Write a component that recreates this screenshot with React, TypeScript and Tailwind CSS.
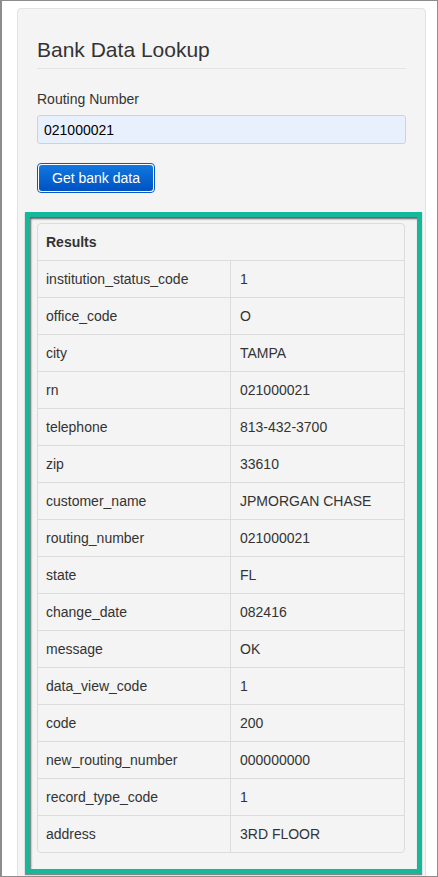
import React from 'react';

const ROWS: [string, string][] = [
  ['institution_status_code', '1'],
  ['office_code', 'O'],
  ['city', 'TAMPA'],
  ['rn', '021000021'],
  ['telephone', '813-432-3700'],
  ['zip', '33610'],
  ['customer_name', 'JPMORGAN CHASE'],
  ['routing_number', '021000021'],
  ['state', 'FL'],
  ['change_date', '082416'],
  ['message', 'OK'],
  ['data_view_code', '1'],
  ['code', '200'],
  ['new_routing_number', '000000000'],
  ['record_type_code', '1'],
  ['address', '3RD FLOOR'],
];

const App: React.FC = () => {
  return (
    <div
      className="w-[438px] h-[877px] overflow-hidden bg-white border border-[#8c8c8c] border-l-2 text-[#333]"
      style={{ fontFamily: '"Liberation Sans", Arial, Helvetica, sans-serif' }}
    >
      <div className="ml-[15px] mt-[7px] w-[409px] h-[900px] bg-[#f4f4f4] border border-[#e2e2e2] rounded-[4px] px-[19px] pt-[29px]">
        <h1 className="text-[21px] leading-[23px] font-normal pb-[7px] border-b border-[#e3e3e3]">
          Bank Data Lookup
        </h1>

        <label className="block mt-[20px] text-[14px] leading-[20px]">Routing Number</label>
        <input
          readOnly
          value="021000021"
          className="mt-[6px] block w-full h-[29px] px-[6px] bg-[#e8f0fe] border border-[#cfd3d8] rounded-[3px] text-[14px] text-black outline-none"
        />

        <button
          type="button"
          className="mt-[19px] h-[30px] w-[118px] rounded-[4px] border border-[#0a57c2] p-[1px] bg-white"
        >
          <span className="flex h-full w-full items-center justify-center rounded-[3px] bg-gradient-to-b from-[#1477e0] to-[#0052c2] text-[14px] text-white">
            Get bank data
          </span>
        </button>

        {/* highlighted results block */}
        <div className="mt-[19px] ml-[-12px] mr-[-16px] h-[662px] border-[5px] border-[#14b89a] shadow-[inset_1px_2px_2px_rgba(0,0,0,0.6),0_1px_1px_rgba(0,0,0,0.45)] pl-[7px] pr-[12px] pt-[6px]">
          <div className="rounded-[4px] border border-[#dcdcdc] bg-[#f4f4f4] text-[14px] overflow-hidden">
            <div className="h-[36px] flex items-center px-[8px] font-bold">Results</div>
            {ROWS.map(([k, v]) => (
              <div key={k} className="grid grid-cols-[192px_1fr] h-[37px] border-t border-[#dcdcdc]">
                <div className="flex items-center px-[8px]">{k}</div>
                <div className="flex items-center px-[9px] border-l border-[#dcdcdc]">{v}</div>
              </div>
            ))}
          </div>
        </div>
      </div>
    </div>
  );
};

export default App;
